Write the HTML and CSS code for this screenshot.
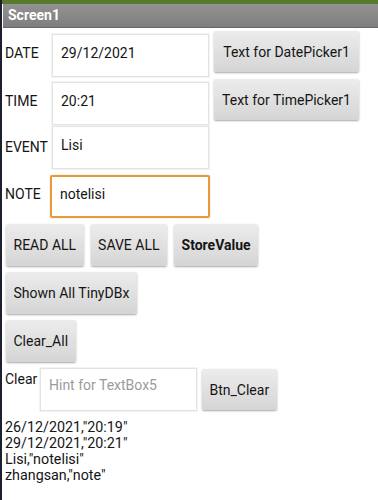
FILE: index.html
```html
<!DOCTYPE html>
<html lang="en">
<head>
    <meta charset="UTF-8">
    <meta name="viewport" content="width=device-width, initial-scale=1.0">
    <title>Screen1</title>
    <link rel="stylesheet" href="styles.css">
</head>
<body>
<div class="phone">
    <div class="statusbar"></div>
    <div class="titlebar">Screen1</div>

    <div class="screen">
        <div class="row row-date">
            <span class="lbl">DATE</span>
            <div class="textbox">29/12/2021</div>
            <button class="btn picker">Text for DatePicker1</button>
        </div>
        <div class="row row-time">
            <span class="lbl">TIME</span>
            <div class="textbox">20:21</div>
            <button class="btn picker">Text for TimePicker1</button>
        </div>
        <div class="row row-event">
            <span class="lbl">EVENT</span>
            <div class="textbox">Lisi</div>
        </div>
        <div class="row row-note">
            <span class="lbl">NOTE</span>
            <div class="textbox focused">notelisi</div>
        </div>

        <div class="actions">
            <button class="btn">READ ALL</button>
            <button class="btn">SAVE ALL</button>
            <button class="btn bold">StoreValue</button>
        </div>
        <div class="actions">
            <button class="btn">Shown All TinyDBx</button>
        </div>
        <div class="actions">
            <button class="btn">Clear_All</button>
        </div>

        <div class="row row-clear">
            <span class="lbl-top">Clear</span>
            <div class="textbox hint">Hint for TextBox5</div>
            <button class="btn">Btn_Clear</button>
        </div>

        <div class="output">
            26/12/2021,"20:19"<br>
            29/12/2021,"20:21"<br>
            Lisi,"notelisi"<br>
            zhangsan,"note"
        </div>
    </div>
</div>
</body>
</html>
```

FILE: styles.css
```css
body{
    margin: 0;
    background: #ffffff;
    font-family: Roboto, "Liberation Sans", sans-serif;
    font-size: 14px;
    color: #151515;
}
.phone{
    height: 500px;
    border-left: 2px solid #1c202e;
    overflow: hidden;
}
.statusbar{
    height: 4px;
    background: #587a2c;
}
.titlebar{
    height: 23px;
    margin-left: 1px;
    padding-left: 5px;
    line-height: 22px;
    font-weight: 700;
    color: #ffffff;
    background: linear-gradient(#929292, #7e7e7e);
    border-bottom: 1px solid #666666;
}
.screen{
    padding: 0 0 0 3px;
}
.row{
    display: flex;
    align-items: flex-start;
}
.lbl{
    align-self: center;
    width: 47px;
}
.lbl-top{
    width: 35px;
    margin-top: 9px;
    line-height: 17px;
}
.textbox{
    box-sizing: border-box;
    width: 157px;
    height: 43px;
    padding: 10px 0 0 8px;
    line-height: 17px;
    border: 1px solid #e3e3e3;
    box-shadow: 0 0 0 1px #f3f3f3;
    background: #ffffff;
}
.textbox.focused{
    border: 2px solid #ea9a35;
    border-radius: 2px;
    padding: 9px 0 0 8px;
    width: 160px;
    margin-left: -2px;
}
.textbox.hint{
    color: #9b9b9b;
    padding-top: 8px;
}
.btn{
    box-sizing: border-box;
    height: 42px;
    padding: 0 7.5px;
    font-family: Roboto, "Liberation Sans", sans-serif;
    font-size: 14px;
    color: #151515;
    background: linear-gradient(#ececec, #d5d5d5);
    border: none;
    border-radius: 2px;
    box-shadow: 0 1px 2px rgba(0, 0, 0, 0.35);
}
.btn.bold{
    font-weight: 700;
}
.picker{
    width: 145px;
    height: 41px;
    margin-left: 5px;
    margin-top: 2px;
}
.row-date{
    padding-top: 1px;
}
.row-date .textbox,
.row-time .textbox{
    margin-top: 5px;
}
.row-event .textbox{
    margin-top: 1px;
}
.row-note .textbox{
    margin-top: 6px;
}
.actions{
    display: flex;
    gap: 6px;
    margin-top: 6px;
    padding-left: 1px;
}
.actions .btn + .btn{
    margin-left: 1px;
}
.row-clear .textbox{
    margin-top: 6px;
}
.row-clear .btn{
    margin-top: 7px;
    margin-left: 5px;
    height: 41px;
}
.output{
    margin-top: 8px;
    font-size: 14.3px;
    line-height: 16px;
}
```
